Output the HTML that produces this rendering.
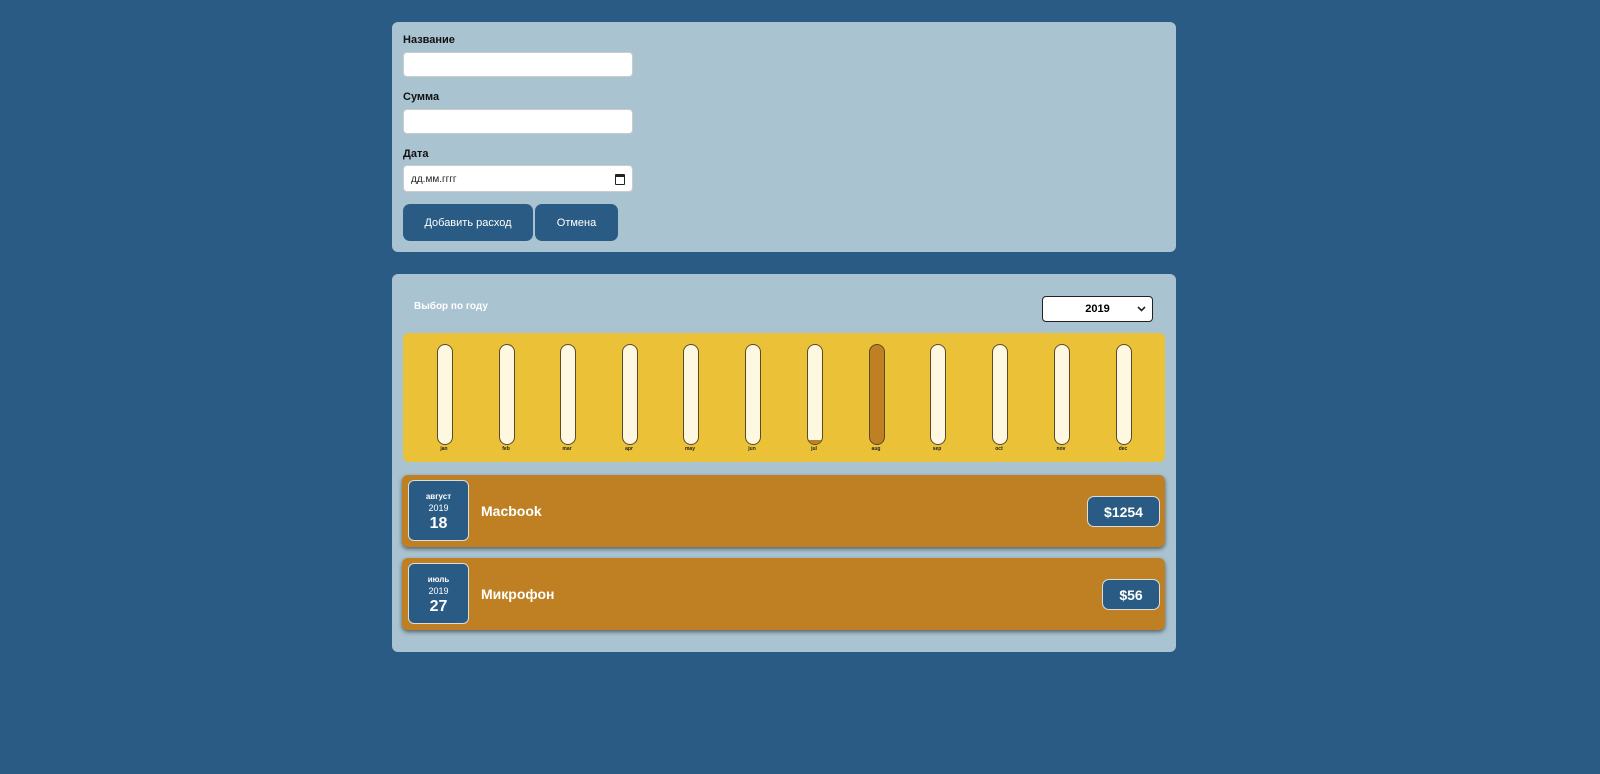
<!DOCTYPE html><html><head><meta charset="utf-8"><style>
body{margin:0;background:#2a5b84;width:1600px;height:774px;position:relative;font-family:"Liberation Sans","DejaVu Sans",sans-serif;}
.p{position:absolute;left:392px;width:784px;background:#a9c3d0;border-radius:6px;}
.lab{position:absolute;left:11px;font-weight:bold;font-size:11px;color:#111}
.inp{position:absolute;left:11px;width:230px;height:25px;background:#fff;border:1px solid #ccc;border-radius:4px;box-sizing:border-box}
.btn{position:absolute;top:182px;height:37px;background:#2a5b84;color:#fff;font-size:11px;border-radius:7px;display:flex;align-items:center;justify-content:center}
.bar{position:absolute;top:11px;width:14px;height:99px;background:#fff8e0;border:1px solid #5a4a2a;border-radius:8px;overflow:hidden}
.ml{position:absolute;top:113px;font-size:5px;color:#222;width:30px;text-align:center;font-weight:bold}
.card{position:absolute;left:10px;width:763px;height:72px;background:#be8023;border-radius:6px;box-shadow:0 2px 4px rgba(0,0,0,.5)}
.db{position:absolute;left:6px;top:5px;width:59px;height:59px;background:#2a5b84;border:1px solid #ddd;border-radius:6px;color:#fff;text-align:center}
.nm{position:absolute;left:79px;top:28px;color:#fff;font-weight:bold;font-size:14px}
.pr{position:absolute;top:21px;height:29px;background:#2a5b84;border:1px solid #ddd;border-radius:7px;color:#fff;font-weight:bold;font-size:14px;display:flex;align-items:center;justify-content:center}
</style></head><body>
<div class="p" style="top:22px;height:230px">
<div class="lab" style="top:12px">Название</div><div class="inp" style="top:30px"></div>
<div class="lab" style="top:69px">Сумма</div><div class="inp" style="top:87px"></div>
<div class="lab" style="top:126px">Дата</div><div class="inp" style="top:143px;height:27px;font-size:10px;padding:8px 0 0 7px;color:#222">дд.мм.гггг<span style="position:absolute;right:7px;top:8px;width:8px;height:7px;border:1.5px solid #222;border-top-width:3px;border-radius:1px"></span></div>
<div class="btn" style="left:11px;width:130px">Добавить расход</div>
<div class="btn" style="left:143px;width:83px">Отмена</div>
</div>
<div class="p" style="top:274px;height:378px">
<div style="position:absolute;left:22px;top:27px;color:#fff;font-weight:bold;font-size:10px">Выбор по году</div>
<div style="position:absolute;left:650px;top:22px;width:109px;height:24px;background:#fff;border:1.5px solid #222;border-radius:4px;font-weight:bold;font-size:11px;line-height:24px;text-align:center">2019<svg style="position:absolute;right:6px;top:9px" width="9" height="6" viewBox="0 0 9 6"><path d="M1 1L4.5 4.5L8 1" fill="none" stroke="#222" stroke-width="1.6"/></svg></div>
<div style="position:absolute;left:11px;top:59px;width:762px;height:129px;background:#ebc137;border-radius:6px">
<div class="bar" style="left:34px"></div><div class="ml" style="left:26px">jan</div>
<div class="bar" style="left:96px"></div><div class="ml" style="left:88px">feb</div>
<div class="bar" style="left:157px"></div><div class="ml" style="left:149px">mar</div>
<div class="bar" style="left:219px"></div><div class="ml" style="left:211px">apr</div>
<div class="bar" style="left:280px"></div><div class="ml" style="left:272px">may</div>
<div class="bar" style="left:342px"></div><div class="ml" style="left:334px">jun</div>
<div class="bar" style="left:404px"><div style="position:absolute;bottom:0;width:100%;height:4px;background:#be8023"></div></div><div class="ml" style="left:396px">jul</div>
<div class="bar" style="left:466px;background:#be8023"></div><div class="ml" style="left:458px">aug</div>
<div class="bar" style="left:527px"></div><div class="ml" style="left:519px">sep</div>
<div class="bar" style="left:589px"></div><div class="ml" style="left:581px">oct</div>
<div class="bar" style="left:651px"></div><div class="ml" style="left:643px">nov</div>
<div class="bar" style="left:713px"></div><div class="ml" style="left:705px">dec</div>
</div>
<div class="card" style="top:201px"><div class="db"><div style="font-size:8px;font-weight:bold;margin-top:11px">август</div><div style="font-size:9px;margin-top:2px">2019</div><div style="font-size:16px;font-weight:bold;margin-top:2px">18</div></div><div class="nm">Macbook</div><div class="pr" style="left:685px;width:71px">$1254</div></div>
<div class="card" style="top:284px"><div class="db"><div style="font-size:8px;font-weight:bold;margin-top:11px">июль</div><div style="font-size:9px;margin-top:2px">2019</div><div style="font-size:16px;font-weight:bold;margin-top:2px">27</div></div><div class="nm">Микрофон</div><div class="pr" style="left:700px;width:56px">$56</div></div>
</div>
</body></html>
